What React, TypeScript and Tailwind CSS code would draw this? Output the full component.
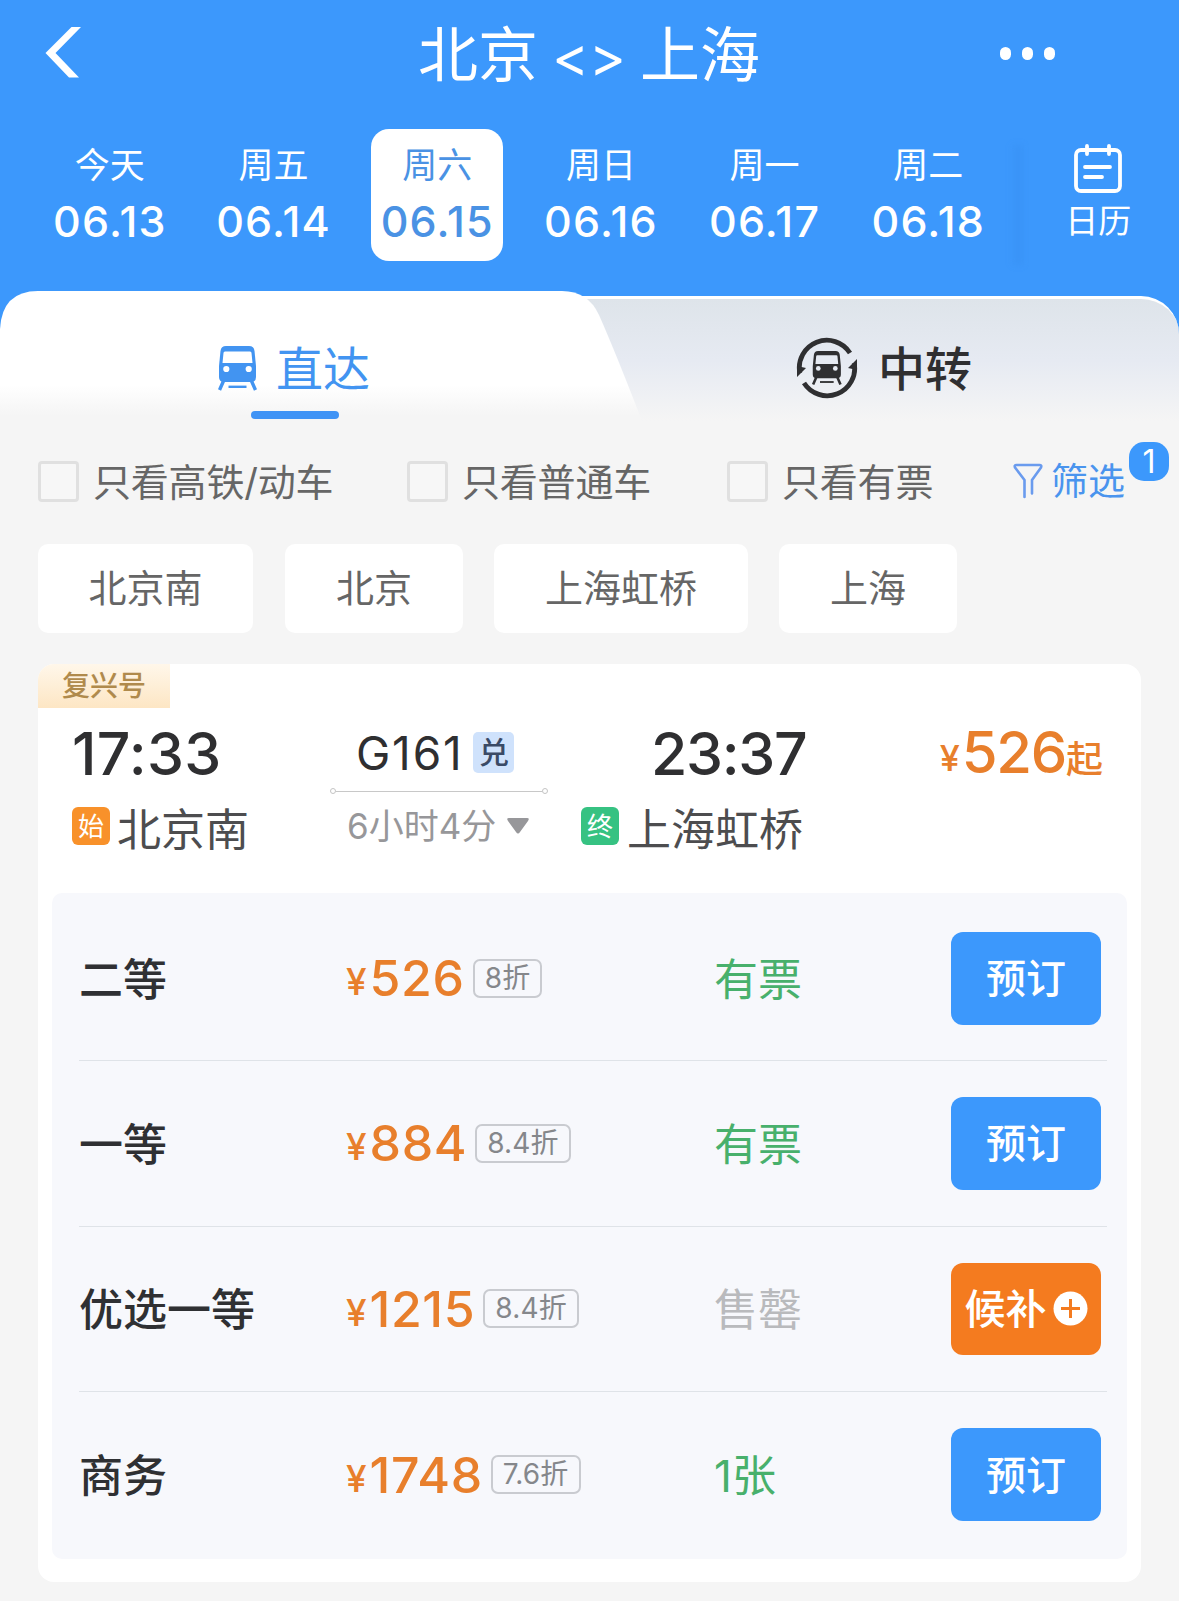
import React from 'react';

interface Day {
  week: string;
  date: string;
}

interface Seat {
  name: string;
  price: string;
  discount: string;
  left: string;
  leftColor: string;
  waitlist?: boolean;
}

const DAYS: Day[] = [
  { week: '今天', date: '06.13' },
  { week: '周五', date: '06.14' },
  { week: '周六', date: '06.15' },
  { week: '周日', date: '06.16' },
  { week: '周一', date: '06.17' },
  { week: '周二', date: '06.18' }
];

const SELECTED_DATE = '06.15';

const SEATS: Seat[] = [
  { name: '二等', price: '526', discount: '8折', left: '有票', leftColor: 'text-[#48b06c]' },
  { name: '一等', price: '884', discount: '8.4折', left: '有票', leftColor: 'text-[#48b06c]' },
  { name: '优选一等', price: '1215', discount: '8.4折', left: '售罄', leftColor: 'text-[#b9babd]', waitlist: true },
  { name: '商务', price: '1748', discount: '7.6折', left: '1张', leftColor: 'text-[#48b06c]' }
];

const TrainShape: React.FC<{ holes: string }> = ({ holes }) => (
  <>
    <path d="M8 0H31Q36 0 36.500 5L38 20V31Q38 36 33 36H6Q1 36 1 31V20L2.500 5Q3 0 8 0Z" fill="currentColor" />
    <path d="M7 5.500H32Q33.500 5.500 33.500 7L34.500 17H4.500L5.500 7Q5.500 5.500 7 5.500Z" fill={holes} />
    <circle cx="8.300" cy="23" r="3.100" fill={holes} />
    <circle cx="30.700" cy="23" r="3.100" fill={holes} />
    <path d="M5.500 35 1.500 44M33.500 35l4 9" stroke="currentColor" strokeWidth="3.400" />
    <path d="M10.500 40.800h18" stroke="currentColor" strokeWidth="2.400" />
  </>
);

const Header: React.FC = () => (
  <div className="h-[106px] flex items-center justify-between pl-[44px] pr-[124px] text-white">
    <svg width="40" height="54" viewBox="0 0 40 54" fill="currentColor">
      <path d="M27.500 1h9.500L11.500 27 35 51.500H25L1.500 27Z" />
    </svg>
    <h1 className="text-[60px] leading-none whitespace-pre ml-[94px] mt-[4px] [word-spacing:-3px]">
      北京 <span className="text-[56px]">&lt;&gt;</span> 上海
    </h1>
    <div className="flex gap-[11px]">
      <span className="w-[11px] h-[13px] rounded-full bg-white" />
      <span className="w-[11px] h-[13px] rounded-full bg-white" />
      <span className="w-[11px] h-[13px] rounded-full bg-white" />
    </div>
  </div>
);

const DateBar: React.FC = () => (
  <div className="flex mt-[23px] pl-[28px] h-[132px] text-white">
    {DAYS.map((d) => (
      <div key={d.date} className="w-[163.700px] flex justify-center">
        <div
          className={`w-[132px] h-[132px] rounded-[18px] flex flex-col items-center pt-[18px]
            ${d.date === SELECTED_DATE ? 'bg-white text-[#4a92e4]' : ''}`}
        >
          <span className="text-[35px] leading-[36px]">{d.week}</span>
          <span className="text-[43px] leading-[44px] mt-[16px] tracking-[1.200px] font-medium">{d.date}</span>
        </div>
      </div>
    ))}
    <div className="w-3 h-[120px] mt-4 bg-gradient-to-r from-transparent to-[#3389ec]/40 blur-[3px]" />
    <div className="flex flex-col items-center ml-[43px] pt-[15px]">
      <svg width="50" height="50" viewBox="0 0 50 50" fill="none" stroke="currentColor" strokeWidth="3.800" strokeLinecap="round">
        <rect x="3" y="6" width="44" height="41" rx="5" />
        <path d="M14 2v8M36 2v8M12 23h25M12 33h17" />
      </svg>
      <span className="text-[33px] leading-[36px] mt-[9px]">日历</span>
    </div>
  </div>
);

const Tabs: React.FC = () => (
  <div className="relative h-[130px] mt-[30px] text-[47px]">
    {/* Inactive tab surface */}
    <div className="absolute left-[540px] right-0 top-[5px] h-[125px] rounded-tr-[38px] border-t-[3px] border-white bg-gradient-to-b from-[#dee4ea] via-[#e6eaf2] to-[#f5f5f5]" />
    {/* Active tab with the slanted right edge */}
    <svg className="absolute left-0 top-0" width="650" height="130" viewBox="0 0 650 130">
      <defs>
        <linearGradient id="tabFade" x1="0" y1="0" x2="0" y2="1">
          <stop offset="0.72" stopColor="#ffffff" />
          <stop offset="0.96" stopColor="#f5f5f5" />
        </linearGradient>
      </defs>
      <path d="M0 38Q2 0 38 0H562Q588 0 599 24Q615 60 642 130H0Z" fill="url(#tabFade)" />
    </svg>
    <div className="relative flex h-full">
      <div className="w-[589px] pt-[52px]">
        <div className="flex items-center pl-[218px] h-[50px] text-[#4294f1]">
          <svg width="39" height="45" viewBox="0 0 39 45">
            <TrainShape holes="#ffffff" />
          </svg>
          <span className="ml-[19px] leading-none">直达</span>
        </div>
        <div className="w-[88px] h-[8px] ml-[251px] mt-[18px] rounded-full bg-[#3f93f5]" />
      </div>
      <div className="flex items-center h-[50px] mt-[52px] pl-[207px] text-[#2f2f31]">
        <svg width="62" height="62" viewBox="0 0 62 62">
          <g fill="none" stroke="currentColor" strokeWidth="4.800">
            <path d="M3.800 36A27.500 27.500 0 0 1 54 16" />
            <path d="M58.200 26A27.500 27.500 0 0 1 8 46" />
          </g>
          <path d="M1 29V40L10 31ZM61 33V22L52 31Z" fill="currentColor" />
          <g transform="translate(16 14) scale(0.760)">
            <TrainShape holes="#e6eaf2" />
          </g>
        </svg>
        <span className="ml-[20px] leading-none font-medium">中转</span>
      </div>
    </div>
  </div>
);

const CheckFilter: React.FC<{ label: string }> = ({ label }) => (
  <label className="flex items-center text-[38px] leading-[40px] tracking-[-0.200px] text-[#666]">
    <span className="w-[41px] h-[41px] rounded-[4px] border-[3px] border-[#e0e0e0] bg-[#f7f7f7] mr-[14px]" />
    <span className="pt-[2px]">{label}</span>
  </label>
);

const Filters: React.FC = () => (
  <div className="flex items-center h-[42px] mt-[39px] pl-[38px]">
    <div className="w-[369px]"><CheckFilter label="只看高铁/动车" /></div>
    <div className="w-[320px]"><CheckFilter label="只看普通车" /></div>
    <div className="w-[286px]"><CheckFilter label="只看有票" /></div>
    <div className="relative flex items-center text-[#4a94ee]">
      <svg width="30" height="36" viewBox="0 0 30 36" fill="none" stroke="#6a9bee" strokeWidth="2.600" strokeLinecap="round" strokeLinejoin="round">
        <path d="M11.500 34V17L2 4.500Q1 2 3.500 2h23Q29 2 28 4.500L19 17v13.500" />
      </svg>
      <span className="text-[37px] leading-none ml-[8px]">筛选</span>
      <span className="absolute left-[116px] -top-[21px] w-[40px] h-[39px] rounded-[15px] bg-[#3c98fc] text-white text-[32px] leading-[39px] text-center">1</span>
    </div>
  </div>
);

const Stations: React.FC = () => (
  <div className="flex mt-[42px] pl-[38px] text-[38px] leading-[88px] text-[#666] text-center">
    <div className="w-[215px] h-[89px] rounded-[10px] bg-white">北京南</div>
    <div className="w-[178px] h-[89px] rounded-[10px] bg-white ml-[32px]">北京</div>
    <div className="w-[254px] h-[89px] rounded-[10px] bg-white ml-[31px]">上海虹桥</div>
    <div className="w-[178px] h-[89px] rounded-[10px] bg-white ml-[31px]">上海</div>
  </div>
);

const TrainInfo: React.FC = () => (
  <div className="flex h-[185px] pt-[13px] text-[#2f2f31]">
    <div className="w-[258px] pl-[34px]">
      <div className="text-[59px] leading-[66px] font-medium tracking-[0.300px]">17:33</div>
      <div className="flex items-center mt-[17px] h-[44px]">
        <span className="w-[38px] h-[38px] rounded-[6px] bg-[#f8912a] text-white text-[26px] leading-[39px] text-center">始</span>
        <span className="text-[44px] leading-none ml-[7px] mt-[7px] text-[#4d4d4f]">北京南</span>
      </div>
    </div>
    <div className="w-[285px] pl-[34px]">
      <div className="flex items-center h-[63px] pl-[26px]">
        <span className="text-[46px] leading-none tracking-[1.800px]">G161</span>
        <span className="w-[41px] h-[41px] ml-[10px] rounded-[5px] bg-[#cfe2fc] text-[#3a4a66] text-[30px] leading-[41px] text-center font-medium">兑</span>
      </div>
      <div className="flex items-center w-[218px] h-[6px] mt-[4px]">
        <span className="w-[6px] h-[6px] rounded-full border border-[#c4c4c4]" />
        <span className="flex-1 h-[1px] bg-[#c8c8c8]" />
        <span className="w-[6px] h-[6px] rounded-full border border-[#c4c4c4]" />
      </div>
      <div className="flex items-center h-[40px] mt-[12px] pl-[17px] text-[#97979a]">
        <span className="text-[35px] leading-none">6小时4分</span>
        <svg className="ml-[11px]" width="22" height="16" viewBox="0 0 22 16" fill="currentColor">
          <path d="M2 0h18q3 0 1 3l-8 11q-2 3-4 0L1 3Q-1 0 2 0Z" />
        </svg>
      </div>
    </div>
    <div className="w-[320px]">
      <div className="text-[59px] leading-[66px] font-medium tracking-[-1.300px] pl-[70px]">23:37</div>
      <div className="flex items-center mt-[17px] h-[44px]">
        <span className="w-[38px] h-[38px] rounded-[6px] bg-[#36c282] text-white text-[26px] leading-[39px] text-center">终</span>
        <span className="text-[44px] leading-none ml-[8px] mt-[7px] text-[#4d4d4f]">上海虹桥</span>
      </div>
    </div>
    <div className="flex flex-1 justify-end items-baseline h-[64px] pr-[38px] -mt-[1px] text-[#e87f2c] font-medium">
      <span className="relative -top-[2px] text-[36px]">¥</span>
      <span className="text-[58px] leading-[64px] tracking-[-1.300px] ml-[2px]">526</span>
      <span className="text-[37px]">起</span>
    </div>
  </div>
);

const SeatRow: React.FC<{ seat: Seat; last: boolean }> = ({ seat, last }) => (
  <div className={`flex items-center ml-[27px] mr-[20px] h-[165.300px] ${last ? '' : 'border-b border-[#dfe3e8]'}`}>
    <div className="w-[267px] text-[44px] leading-none font-medium text-[#2f3033] pt-[3px]">{seat.name}</div>
    <div className="w-[368px] flex items-center text-[#e87f2c]">
      <span className="flex items-baseline leading-none font-medium">
        <span className="relative -top-[1px] text-[37px]">¥</span>
        <span className="text-[50px] leading-[50px] ml-[3px] tracking-[0.600px]">{seat.price}</span>
      </span>
      <span className="h-[39px] ml-[8px] px-[10px] rounded-[7px] border-2 border-[#c9cbd0] text-[28px] leading-[34px] tracking-[0.200px] text-[#85878b]">{seat.discount}</span>
    </div>
    <div className={`w-[237px] text-[44px] leading-none pt-[3px] ${seat.leftColor}`}>{seat.left}</div>
    {seat.waitlist ? (
      <button className="flex items-center justify-center w-[150px] h-[92px] rounded-[12px] bg-[#f47b1f] text-white text-[41px] leading-none font-medium">
        <span className="pt-[2px]">候补</span>
        <svg className="ml-[6px]" width="35" height="35" viewBox="0 0 35 35">
          <circle cx="17.500" cy="17.500" r="17" fill="#fff" />
          <path d="M17.500 8v19M8 17.500h19" stroke="#f47b1f" strokeWidth="3" />
        </svg>
      </button>
    ) : (
      <button className="w-[150px] h-[93px] pt-[2px] rounded-[12px] bg-[#3c98fc] text-white text-[40px] leading-none font-medium">预订</button>
    )}
  </div>
);

const App: React.FC = () => {
  return (
    <div className="w-[1179px] h-[1601px] overflow-hidden bg-[#f5f5f5] font-['Inter','Noto_Sans_CJK_SC',sans-serif]">
      <div className="bg-[#3c98fc]">
        <Header />
        <DateBar />
        <Tabs />
      </div>
      <Filters />
      <Stations />

      {/* Train card */}
      <div className="w-[1103px] h-[918px] ml-[38px] mt-[31px] rounded-[16px] bg-white overflow-hidden">
        <div className="w-[132px] h-[44px] bg-gradient-to-b from-[#fff7ea] to-[#fde6c4] text-[#b08a4c] text-[28px] leading-[45px] text-center font-medium">复兴号</div>
        <TrainInfo />
        <div className="ml-[14px] w-[1075px] h-[666px] rounded-[10px] bg-[#f7f8fc] pt-[3px]">
          {SEATS.map((seat, i) => (
            <SeatRow key={seat.name} seat={seat} last={i === SEATS.length - 1} />
          ))}
        </div>
      </div>
    </div>
  );
};

export default App;
